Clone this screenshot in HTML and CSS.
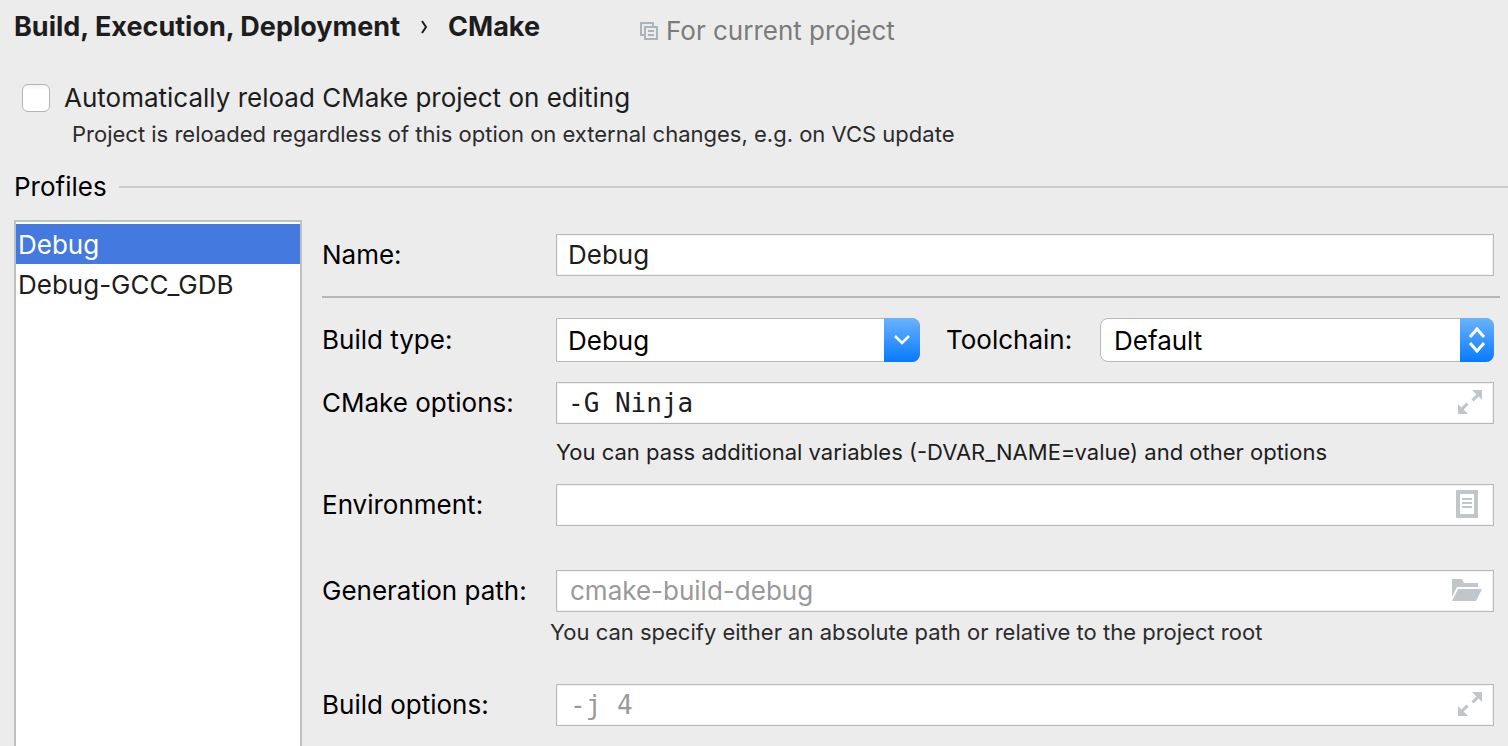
FILE: index.html
```html
<!DOCTYPE html>
<html lang="en">
<head>
<meta charset="utf-8">
<meta name="viewport" content="width=device-width, initial-scale=1">
<title>CMake</title>
<link rel="stylesheet" href="styles.css">
</head>
<body>
<svg class="defs" aria-hidden="true">
  <symbol id="expand" viewBox="0 0 24 24"><path fill="#c0c6ca" d="M14 0h10v10l-3.4-3.4-5 4.8-2.2-2.2 5-4.8zM0 14l3.4 3.4 5-4.8 2.2 2.2-5 4.8L10 24H0z"/></symbol>
</svg>
<main class="page">
  <header class="header">
    <h1 class="crumbs">
      <span>Build, Execution, Deployment</span>
      <svg class="crumb-arrow" viewBox="0 0 8 14" aria-hidden="true"><path d="M2 1l4 6-4 6" fill="none" stroke="#1d1d1d" stroke-width="2"/></svg>
      <span>CMake</span>
    </h1>
    <p class="scope">
      <svg class="scope-icon" viewBox="0 0 18 18" aria-hidden="true"><path d="M4 13H1V1h12v3M5 5h12v12H5zM8 9h6M8 13h6" fill="none" stroke="#aab4bb" stroke-width="2"/></svg>
      <span>For current project</span>
    </p>
  </header>

  <label class="reload"><input class="checkbox" type="checkbox"><span>Automatically reload CMake project on editing</span></label>
  <p class="reload-hint">Project is reloaded regardless of this option on external changes, e.g. on VCS update</p>

  <h2 class="section-title">Profiles</h2>

  <div class="content">
    <nav class="profiles" aria-label="Profiles">
      <button class="profile selected" type="button">Debug</button>
      <button class="profile" type="button">Debug-GCC_GDB</button>
    </nav>

    <form class="form">
      <div class="row">
        <label for="name">Name:</label>
        <div class="field"><input class="input" id="name" type="text" value="Debug"></div>
      </div>
      <hr class="divider">
      <div class="row">
        <label for="type">Build type:</label>
        <div class="pair">
          <div class="combo square">
            <select class="select" id="type"><option>Debug</option></select>
            <span class="arrow"><svg class="chevron" viewBox="0 0 16 10" aria-hidden="true"><path d="M1 1l7 7 7-7" fill="none" stroke="#fff" stroke-width="2.6"/></svg></span>
          </div>
          <label class="toolchain" for="toolchain">Toolchain:</label>
          <div class="combo round">
            <select class="select" id="toolchain"><option>Default</option></select>
            <span class="arrow"><svg class="updown" viewBox="0 0 16 26" aria-hidden="true"><path d="M1 10l7-8 7 8M1 16l7 8 7-8" fill="none" stroke="#fff" stroke-width="3"/></svg></span>
          </div>
        </div>
      </div>
      <div class="row options">
        <label for="options">CMake options:</label>
        <div class="field">
          <input class="input mono" id="options" type="text" value="-G Ninja">
          <button class="tool" type="button" aria-label="Expand"><svg class="icon-expand"><use href="#expand"/></svg></button>
        </div>
      </div>
      <p class="hint">You can pass additional variables (-DVAR_NAME=value) and other options</p>
      <div class="row">
        <label for="env">Environment:</label>
        <div class="field">
          <input class="input" id="env" type="text">
          <button class="tool" type="button" aria-label="Edit variables"><svg class="icon-doc" viewBox="0 0 22 28"><path fill="#c0c6ca" fill-rule="evenodd" d="M0 0h22v28H0zM4 4v20h14V4z"/><path fill="#c0c6ca" d="M6 8h10v2H6zM6 12h10v2H6zM6 16h10v2H6z"/></svg></button>
        </div>
      </div>
      <div class="row path">
        <label for="path">Generation path:</label>
        <div class="field">
          <input class="input" id="path" type="text" placeholder="cmake-build-debug">
          <button class="tool" type="button" aria-label="Browse"><svg class="icon-folder" viewBox="0 0 30 22"><path fill="#c0c6ca" d="M0 0h10l2 4h14v4H5L0 18zM6 10h24l-6 12H0z"/></svg></button>
        </div>
      </div>
      <p class="hint path-hint">You can specify either an absolute path or relative to the project root</p>
      <div class="row">
        <label for="build">Build options:</label>
        <div class="field">
          <input class="input mono" id="build" type="text" placeholder="-j 4">
          <button class="tool" type="button" aria-label="Expand"><svg class="icon-expand"><use href="#expand"/></svg></button>
        </div>
      </div>
    </form>
  </div>
</main>
</body>
</html>
```
FILE: styles.css
```css
* {
  box-sizing: border-box;
}

body {
  margin: 0;
  background: #ececec;
  color: #000;
  font: 26px/32px Inter, "Liberation Sans", sans-serif;
}

h1, h2, p {
  margin: 0;
  font-size: inherit;
  font-weight: inherit;
}

.defs {
  display: none;
}

.page {
  display: flex;
  flex-direction: column;
  min-height: 100vh;
}

.header {
  display: flex;
  align-items: flex-start;
  gap: 100px;
  padding: 11px 14px 0;
}

.crumbs {
  display: flex;
  align-items: center;
  gap: 20px;
  color: #1d1d1d;
  font-size: 27px;
  font-weight: 700;
}

.crumb-arrow {
  width: 8px;
  height: 14px;
}

.scope {
  display: flex;
  align-items: center;
  gap: 8px;
  padding-top: 4px;
  color: #7b7b7b;
}

.scope-icon {
  width: 18px;
  height: 18px;
}

.reload {
  display: flex;
  align-items: center;
  align-self: flex-start;
  gap: 14px;
  margin: 35px 0 0 22px;
  color: #1d1d1d;
}

.checkbox {
  appearance: none;
  width: 28px;
  height: 28px;
  margin: 0;
  border: 1px solid #b4b4b4;
  border-radius: 6px;
  background: linear-gradient(#f2f2f2, #fff 5px);
}

.checkbox:checked {
  background: #067aff;
}

.reload-hint {
  padding: 4px 0 0 72px;
  color: #2b2b2b;
  font-size: 22px;
}

.section-title {
  display: flex;
  align-items: center;
  gap: 12px;
  margin: 21px 0 0 14px;
}

.section-title::after {
  content: "";
  flex: 1;
  height: 2px;
  background: #cbcbcb;
}

.content {
  display: flex;
  flex: 1;
  gap: 20px;
  padding: 17px 8px 0 14px;
}

.profiles {
  flex: none;
  width: 288px;
  padding-top: 2px;
  border: 2px solid #c0c0c0;
  border-bottom: 0;
  background: #fff;
}

.profile {
  display: block;
  width: 100%;
  height: 40px;
  padding: 2px 2px 0;
  border: 0;
  background: none;
  color: #1d1d1d;
  font: inherit;
  text-align: left;
}

.profile.selected {
  background: #4479df;
  color: #fff;
}

.form {
  flex: 1;
  min-width: 0;
  padding: 14px 0 20px;
}

.row {
  display: grid;
  grid-template-columns: 234px 1fr;
  align-items: center;
  padding-right: 6px;
}

.divider {
  height: 2px;
  margin: 20px 0;
  border: 0;
  background: #b5b5b5;
}

.field {
  display: flex;
  height: 42px;
  border: 1px solid #b9b9b9;
  background: #fff;
  box-shadow: inset 0 0 0 1px #f1f1f1;
}

.input {
  flex: 1;
  min-width: 0;
  padding: 0 11px;
  border: 0;
  background: none;
  color: #1d1d1d;
  font: inherit;
}

.input::placeholder {
  color: #999;
  opacity: 1;
}

.input:placeholder-shown {
  padding-left: 13px;
}

.input.mono {
  font: 26px/32px "DejaVu Sans Mono", monospace;
}

.tool {
  display: flex;
  align-items: center;
  justify-content: center;
  width: 52px;
  padding: 0 0 2px;
  border: 0;
  background: none;
}

.icon-expand {
  width: 24px;
  height: 24px;
  margin-left: 6px;
}

.icon-doc {
  width: 22px;
  height: 28px;
}

.icon-folder {
  width: 30px;
  height: 22px;
}

.pair {
  display: grid;
  grid-template-columns: 364px 180px 1fr;
  align-items: center;
}

.toolchain {
  padding-left: 26px;
}

.combo {
  display: grid;
  height: 44px;
}

.combo > * {
  grid-area: 1 / 1;
}

.select {
  appearance: none;
  width: 100%;
  padding: 2px 40px 0 11px;
  border: 1px solid #b9b9b9;
  border-radius: 0 8px 8px 0;
  background: #fff;
  color: #000;
  font: inherit;
}

.round .select {
  padding-left: 13px;
  border-radius: 8px;
}

.arrow {
  display: flex;
  align-items: center;
  justify-content: center;
  justify-self: end;
  width: 36px;
  border-radius: 0 8px 8px 0;
  background: linear-gradient(#6bb3fb, #067aff);
  pointer-events: none;
}

.round .arrow {
  width: 34px;
}

.chevron {
  width: 16px;
  height: 10px;
}

.updown {
  width: 16px;
  height: 26px;
}

.options {
  margin-top: 20px;
}

.hint {
  padding: 12px 0 16px 234px;
  color: #1d1d1d;
  font-size: 22px;
}

.path {
  margin-top: 44px;
}

.path-hint {
  padding: 4px 0 36px 228px;
  color: #2b2b2b;
}
```
